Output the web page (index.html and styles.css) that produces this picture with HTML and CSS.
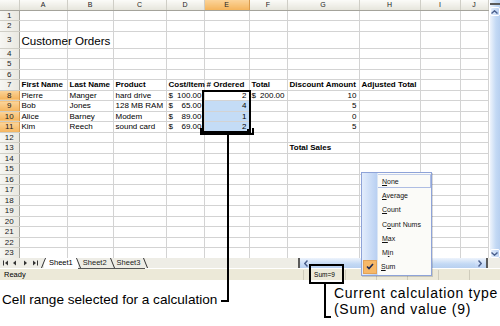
FILE: index.html
```html
<!DOCTYPE html>
<html lang="en">
<head>
  <meta charset="UTF-8" />
  <title>Customer Orders - AutoCalculate</title>
  <link rel="stylesheet" href="styles.css">
</head>
<body>
  <div class="window">
    <div class="sheet">
      <table class="grid">
        <colgroup>
          <col class="c-head"><col class="c-a"><col class="c-b"><col class="c-c"><col class="c-d"><col class="c-e"><col class="c-f"><col class="c-g"><col class="c-h"><col class="c-i"><col class="c-j">
        </colgroup>
        <tr class="heads"><th></th><th>A</th><th>B</th><th>C</th><th>D</th><th class="hot">E</th><th>F</th><th>G</th><th>H</th><th>I</th><th>J</th></tr>
        <tr><th>1</th><td></td><td></td><td></td><td></td><td></td><td></td><td></td><td></td><td></td><td></td></tr>
        <tr><th>2</th><td></td><td></td><td></td><td></td><td></td><td></td><td></td><td></td><td></td><td></td></tr>
        <tr class="tall"><th>3</th><td class="title">Customer Orders</td><td></td><td></td><td></td><td></td><td></td><td></td><td></td><td></td><td></td></tr>
        <tr><th>4</th><td></td><td></td><td></td><td></td><td></td><td></td><td></td><td></td><td></td><td></td></tr>
        <tr><th>5</th><td></td><td></td><td></td><td></td><td></td><td></td><td></td><td></td><td></td><td></td></tr>
        <tr><th>6</th><td></td><td></td><td></td><td></td><td></td><td></td><td></td><td></td><td></td><td></td></tr>
        <tr class="labels"><th>7</th><td>First Name</td><td>Last Name</td><td>Product</td><td>Cost/Item</td><td># Ordered</td><td>Total</td><td>Discount Amount</td><td>Adjusted Total</td><td></td><td></td></tr>
        <tr><th class="hot">8</th><td>Pierre</td><td>Manger</td><td>hard drive</td><td class="acct"><span>$</span>100.00</td><td class="num">2</td><td class="acct"><span>$</span>200.00</td><td class="num">10</td><td></td><td></td><td></td></tr>
        <tr><th class="hot">9</th><td>Bob</td><td>Jones</td><td>128 MB RAM</td><td class="acct"><span>$</span>65.00</td><td class="num sel">4</td><td></td><td class="num">5</td><td></td><td></td><td></td></tr>
        <tr><th class="hot">10</th><td>Alice</td><td>Barney</td><td>Modem</td><td class="acct"><span>$</span>89.00</td><td class="num sel">1</td><td></td><td class="num">0</td><td></td><td></td><td></td></tr>
        <tr><th class="hot">11</th><td>Kim</td><td>Reech</td><td>sound card</td><td class="acct"><span>$</span>69.00</td><td class="num sel">2</td><td></td><td class="num">5</td><td></td><td></td><td></td></tr>
        <tr><th>12</th><td></td><td></td><td></td><td></td><td></td><td></td><td></td><td></td><td></td><td></td></tr>
        <tr><th>13</th><td></td><td></td><td></td><td></td><td></td><td></td><td class="bold">Total Sales</td><td></td><td></td><td></td></tr>
        <tr><th>14</th><td></td><td></td><td></td><td></td><td></td><td></td><td></td><td></td><td></td><td></td></tr>
        <tr><th>15</th><td></td><td></td><td></td><td></td><td></td><td></td><td></td><td></td><td></td><td></td></tr>
        <tr><th>16</th><td></td><td></td><td></td><td></td><td></td><td></td><td></td><td></td><td></td><td></td></tr>
        <tr><th>17</th><td></td><td></td><td></td><td></td><td></td><td></td><td></td><td></td><td></td><td></td></tr>
        <tr><th>18</th><td></td><td></td><td></td><td></td><td></td><td></td><td></td><td></td><td></td><td></td></tr>
        <tr><th>19</th><td></td><td></td><td></td><td></td><td></td><td></td><td></td><td></td><td></td><td></td></tr>
        <tr><th>20</th><td></td><td></td><td></td><td></td><td></td><td></td><td></td><td></td><td></td><td></td></tr>
        <tr><th>21</th><td></td><td></td><td></td><td></td><td></td><td></td><td></td><td></td><td></td><td></td></tr>
        <tr><th>22</th><td></td><td></td><td></td><td></td><td></td><td></td><td></td><td></td><td></td><td></td></tr>
        <tr><th>23</th><td></td><td></td><td></td><td></td><td></td><td></td><td></td><td></td><td></td><td></td></tr>
      </table>

      <div class="vscroll">
        <span class="split"></span>
        <span class="sbtn"><svg width="7" height="4" viewBox="0 0 7 4"><path d="M0.5 3.5 L3.5 0.8 L6.5 3.5" fill="none" stroke="#4a5f8c" stroke-width="1.4"/></svg></span>
        <span class="strack"></span>
        <span class="sbtn"><svg width="7" height="4" viewBox="0 0 7 4"><path d="M0.5 0.5 L3.5 3.2 L6.5 0.5" fill="none" stroke="#4a5f8c" stroke-width="1.4"/></svg></span>
      </div>
    </div>

    <div class="tabbar">
      <div class="tab-nav">
        <svg width="40" height="6" viewBox="0 0 40 6">
          <rect x="1" y="0.5" width="1" height="5" fill="#333"/><path d="M6 0.5 L3 3 L6 5.5Z" fill="#333"/>
          <path d="M14 0.5 L11 3 L14 5.5Z" fill="#333"/>
          <path d="M22 0.5 L25 3 L22 5.5Z" fill="#333"/>
          <path d="M31 0.5 L34 3 L31 5.5Z" fill="#333"/><rect x="35" y="0.5" width="1" height="5" fill="#333"/>
        </svg>
      </div>
      <div class="tabs">
        <span class="tab active">Sheet1</span>
        <span class="tab">Sheet2</span>
        <span class="tab">Sheet3</span>
      </div>
      <div class="hscroll">
        <span class="hsplit"></span>
        <span class="hbtn"><svg width="4" height="7" viewBox="0 0 4 7"><path d="M3.5 0.5 L0.8 3.5 L3.5 6.5" fill="none" stroke="#4a5f8c" stroke-width="1.4"/></svg></span>
        <span class="htrack"></span>
        <span class="hbtn"><svg width="4" height="7" viewBox="0 0 4 7"><path d="M0.5 0.5 L3.2 3.5 L0.5 6.5" fill="none" stroke="#4a5f8c" stroke-width="1.4"/></svg></span>
        <span class="hend"></span>
      </div>
    </div>

    <div class="status">
      <span class="ready">Ready</span>
      <span class="panel sum">Sum=9</span>
      <span class="panel"></span>
      <span class="panel"></span>
      <span class="panel"></span>
      <span class="panel"></span>
      <span class="panel"></span>
    </div>

    <ul class="calc-menu">
      <li class="hover"><span class="icon"></span><span><u>N</u>one</span></li>
      <li><span class="icon"></span><span><u>A</u>verage</span></li>
      <li><span class="icon"></span><span><u>C</u>ount</span></li>
      <li><span class="icon"></span><span>C<u>o</u>unt Nums</span></li>
      <li><span class="icon"></span><span><u>M</u>ax</span></li>
      <li><span class="icon"></span><span>M<u>i</u>n</span></li>
      <li class="checked"><span class="icon"><svg width="8" height="7" viewBox="0 0 8 7"><path d="M1 3.5 L3 5.5 L7 1" fill="none" stroke="#1e2a55" stroke-width="1.6"/></svg></span><span><u>S</u>um</span></li>
    </ul>
  </div>

  <div class="captions">
    <p class="caption range">Cell range selected for a calculation</p>
    <p class="caption calc">Current calculation type<br>(Sum) and value (9)</p>
  </div>

  <!-- selection box and callout lines -->
  <svg class="callouts" width="500" height="326" viewBox="0 0 500 326">
    <g fill="none" stroke="#000" stroke-width="2">
      <rect x="203" y="91" width="47" height="41"/>
      <path d="M201 128 V134 H253 V128"/>
      <path d="M228 134 V301 H221"/>
      <rect x="310" y="265" width="33" height="18"/>
      <path d="M325 284 V317 H331"/>
    </g>
    <rect x="247" y="129" width="4" height="4" fill="#000"/>
  </svg>
</body>
</html>
```

FILE: styles.css
```css
* {
  margin: 0;
  padding: 0;
  box-sizing: border-box;
}

body {
  position: relative;
  width: 500px;
  height: 326px;
  overflow: hidden;
  background: #ffffff;
  font-family: 'Liberation Sans', Arial, sans-serif;
  color: #000;
}

.window {
  position: relative;
  background: #ece9d8;
}

/* Worksheet grid */
.sheet {
  display: flex;
  height: 258px;
  overflow: hidden;
}

.grid {
  width: 488px;
  table-layout: fixed;
  border-collapse: collapse;
  background: #ffffff;
  font-size: 8px;
}

.c-head { width: 19px; }
.c-a { width: 48px; }
.c-b { width: 46px; }
.c-c { width: 53px; }
.c-d { width: 38px; }
.c-e { width: 45px; }
.c-f { width: 38px; }
.c-g { width: 72px; }
.c-h { width: 61px; }
.c-i { width: 40px; }
.c-j { width: 28px; }

.grid tr {
  height: 10.5px;
}

.grid tr.heads {
  height: 10px;
}

.grid tr.tall {
  height: 17px;
}

.grid td {
  padding: 0 2px;
  border-right: 1px solid #d3d3d3;
  border-bottom: 1px solid #d3d3d3;
  line-height: 9px;
  white-space: nowrap;
  vertical-align: middle;
}

.grid th {
  padding: 0;
  font-weight: normal;
  font-size: 8px;
  line-height: 9px;
  color: #222;
  text-align: center;
  background: linear-gradient(90deg, #f6f6f2, #e9e8e1);
  border-right: 1px solid #a4a39b;
  border-bottom: 1px solid #cfcec6;
}

.grid .heads th {
  font-size: 7px;
  background: linear-gradient(#fbfbf8, #e6e5dc);
  border-right: 1px solid #cfcec6;
  border-bottom: 1px solid #a4a39b;
}

.grid th.hot,
.grid .heads th.hot {
  background: linear-gradient(#fbd49a, #f4b45c);
  border-right-color: #d89a4c;
}

.grid td.title {
  font-size: 11.6px;
  line-height: 14px;
  vertical-align: bottom;
  padding-bottom: 0;
}

.grid .labels td,
.grid td.bold {
  font-weight: bold;
}

.grid td.num {
  text-align: right;
}

.grid td.acct {
  text-align: right;
}

.grid td.acct span {
  float: left;
}

.grid td.sel {
  background: #c4dcf6;
}

/* Vertical scrollbar */
.vscroll {
  width: 12px;
  display: flex;
  flex-direction: column;
  align-items: center;
  background: linear-gradient(90deg, #eef4fc, #c3d9f4 60%, #b8d0f0);
  border-left: 1px solid #ffffff;
}

.split {
  width: 10px;
  height: 2px;
  margin: 3px 0 2px;
  background: #5a5a5a;
}

.sbtn {
  width: 10px;
  height: 9px;
  display: flex;
  align-items: center;
  justify-content: center;
  border-radius: 2px;
  background: linear-gradient(90deg, #e4eefc, #b9d0f2);
  border: 1px solid #ffffff;
}

.strack {
  flex: 1;
}

/* Sheet tabs and horizontal scrollbar */
.tabbar {
  height: 10px;
  display: flex;
  align-items: center;
  padding-right: 12px;
  background: #eeede6;
  font-size: 7.5px;
}

.tab-nav {
  width: 44px;
  padding-left: 2px;
  display: flex;
  align-items: center;
}

.tabs {
  display: flex;
  height: 10px;
  align-items: center;
}

.tab {
  position: relative;
  padding: 0 5px;
  line-height: 10px;
  color: #222;
  border-bottom: 1px solid #555;
}

.tab.active {
  color: #000;
  background: #ffffff;
  border-bottom-color: transparent;
}

.tab::after {
  content: '';
  position: absolute;
  right: -1px;
  top: 0;
  height: 10px;
  border-left: 1px solid #333;
  transform: skewX(22deg);
}

.tab.active::before {
  content: '';
  position: absolute;
  left: -1px;
  top: 0;
  height: 10px;
  border-left: 1px solid #333;
  transform: skewX(-22deg);
}

.hscroll {
  margin-left: auto;
  width: 190px;
  height: 10px;
  display: flex;
  align-items: center;
  background: linear-gradient(#eef4fc, #c3d9f4 60%, #b8d0f0);
}

.hsplit,
.hend {
  width: 2px;
  height: 10px;
  background: #5a5a5a;
}

.hbtn {
  width: 10px;
  height: 9px;
  margin: 0 1px;
  display: flex;
  align-items: center;
  justify-content: center;
  border-radius: 2px;
  background: linear-gradient(#e4eefc, #b9d0f2);
}

.htrack {
  flex: 1;
}

/* Status bar */
.status {
  height: 12px;
  display: flex;
  align-items: center;
  background: #ece9d8;
  border-top: 1px solid #ffffff;
  font-size: 7px;
}

.ready {
  flex: 1;
  padding-left: 4px;
  font-size: 7.5px;
}

.panel {
  width: 31px;
  height: 10px;
  border-left: 1px solid #cfccbc;
  text-align: center;
  line-height: 10px;
}

.panel.sum {
  width: 42px;
  font-size: 6.5px;
}

/* AutoCalculate popup */
.calc-menu {
  position: absolute;
  left: 361px;
  top: 172px;
  width: 71px;
  padding: 1px 0;
  list-style: none;
  font-size: 7px;
  color: #111;
  background: linear-gradient(90deg, #e3edfc 0, #b9d0f2 15px, #fbfbf8 16px);
  border: 1px solid #8ea3d8;
  box-shadow: 1px 1px 0 rgba(0, 0, 0, 0.15);
}

.calc-menu li {
  position: relative;
  height: 14.3px;
  display: flex;
  align-items: center;
}

.calc-menu .icon {
  width: 15px;
  height: 14px;
  margin-right: 5px;
  display: flex;
  align-items: center;
  justify-content: center;
}

.calc-menu li.checked .icon {
  margin-left: 1px;
  width: 14px;
  margin-right: 4px;
  background: #f6b868;
  border: 1px solid #e2a256;
}

.calc-menu li.hover::after {
  content: '';
  position: absolute;
  left: 16px;
  top: 0;
  right: 0;
  bottom: 0;
  border-top: 1px solid #c3cfe9;
  border-bottom: 1px solid #aebde3;
  border-right: 1px solid #aebde3;
}

/* Captions under the window */
.captions {
  height: 46px;
  display: flex;
  background: #ffffff;
}

.caption {
  white-space: nowrap;
  color: #000;
}

.caption.range {
  padding: 12px 0 0 2px;
  font-size: 13.6px;
  line-height: 16px;
}

.caption.calc {
  margin-left: auto;
  width: 166px;
  padding-top: 5px;
  font-size: 14px;
  line-height: 16px;
  letter-spacing: 0.7px;
}

.callouts {
  position: absolute;
  left: 0;
  top: 0;
  pointer-events: none;
}
```
